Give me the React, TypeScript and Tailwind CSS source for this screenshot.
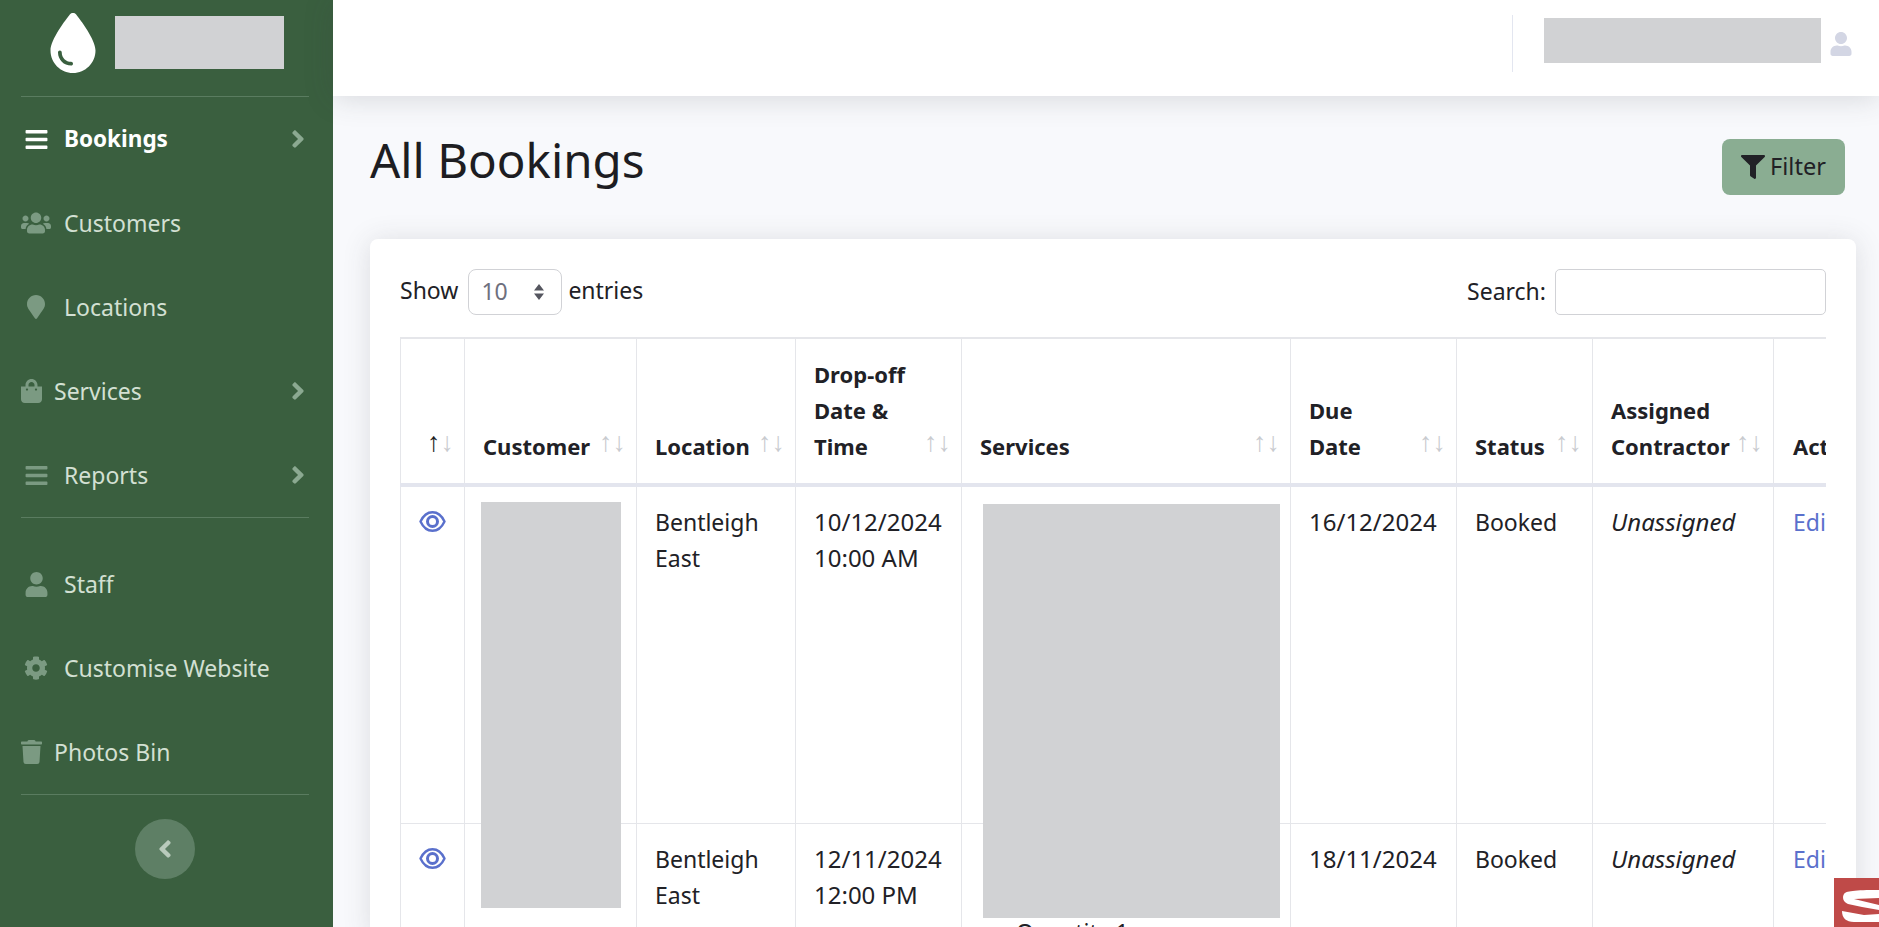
import type { ReactNode } from "react";
import {
  FaAngleLeft,
  FaAngleRight,
  FaBars,
  FaCog,
  FaFilter,
  FaMapMarker,
  FaShoppingBag,
  FaTrash,
  FaUser,
  FaUsers,
} from "react-icons/fa";
import { FaDroplet } from "react-icons/fa6";

const font = { fontFamily: '"Noto Sans", "Lato", sans-serif' };

function NavItem({
  icon,
  label,
  active,
  arrow,
  tight,
}: {
  icon: ReactNode;
  label: string;
  active?: boolean;
  arrow?: boolean;
  tight?: boolean;
}) {
  return (
    <div className="h-[84px] flex items-center pl-[21px] pr-[21px]">
      <span
        className={`flex justify-center shrink-0 ${tight ? "w-[21px] mr-[12px]" : "w-[30px] mr-[13px]"} ${
          active ? "text-white" : "text-[#7b9a82]"
        }`}
      >
        {icon}
      </span>
      <span className={`${active ? "text-[22.5px] font-bold text-white" : "text-[23px] text-[#d3e0d3]"}`}>{label}</span>
      {arrow && <FaAngleRight className="ml-auto text-[#8ba991]" size={28} />}
    </div>
  );
}

function Sidebar() {
  return (
    <aside className="w-[333px] shrink-0 bg-[#3a5f3f] flex flex-col">
      <div className="h-[96px] flex items-center pl-[43px] pb-[10px]">
        <FaDroplet className="text-white" size={60} />
        <div className="ml-[12px] -mt-[1px] w-[169px] h-[53px] bg-[#d1d2d4]" />
      </div>
      <div className="ml-[21px] mr-[24px] border-t border-[#5a7c60]" />
      <NavItem icon={<FaBars size={25} />} label="Bookings" active arrow />
      <NavItem icon={<FaUsers size={30} />} label="Customers" />
      <NavItem icon={<FaMapMarker size={24} />} label="Locations" />
      <NavItem icon={<FaShoppingBag size={24} />} label="Services" arrow tight />
      <NavItem icon={<FaBars size={25} />} label="Reports" arrow />
      <div className="ml-[21px] mr-[24px] border-t border-[#5a7c60] mb-[24px]" />
      <NavItem icon={<FaUser size={25} />} label="Staff" />
      <NavItem icon={<FaCog size={24} />} label="Customise Website" />
      <NavItem icon={<FaTrash size={24} />} label="Photos Bin" tight />
      <div className="ml-[21px] mr-[24px] border-t border-[#5a7c60] mb-[24px]" />
      <div className="self-center w-[60px] h-[60px] -ml-[3px] rounded-full bg-[#5e7f65] flex items-center justify-center">
        <FaAngleLeft className="text-[#b9cabc]" size={28} />
      </div>
    </aside>
  );
}

function EyeIcon() {
  return (
    <svg width="27" height="21" viewBox="0 0 27 21" fill="none" stroke="#5a70cc" strokeWidth="2.4" strokeLinejoin="round">
      <path d="M1.5 10.5 C4.5 4 8.5 1.2 13.5 1.2 C18.5 1.2 22.5 4 25.5 10.5 C22.5 17 18.5 19.8 13.5 19.8 C8.5 19.8 4.5 17 1.5 10.5 Z" />
      <circle cx="13.5" cy="10.5" r="5" strokeWidth="3" />
    </svg>
  );
}

function Sort({ active }: { active?: boolean }) {
  return (
    <span
      className="shrink-0 mb-[8px] text-[27px] leading-[28px] font-normal text-[#c9cbcf]"
      style={{ fontFamily: '"Liberation Sans", sans-serif' }}
    >
      <span className={active ? "text-[#1d1d22]" : ""}>↑</span>↓
    </span>
  );
}

const columns = ["w-[64px]", "w-[172px]", "w-[159px]", "w-[166px]", "w-[329px]", "w-[166px]", "w-[136px]", "w-[181px]", "w-[120px]"];

const headers: ReactNode[] = [
  "",
  "Customer",
  "Location",
  <>Drop-off<br />Date &amp;<br />Time</>,
  "Services",
  <>Due<br />Date</>,
  "Status",
  <>Assigned<br />Contractor</>,
];

function Row({
  drop,
  time,
  due,
  first,
}: {
  drop: string;
  time: string;
  due: string;
  first?: boolean;
}) {
  const cell = "border border-[#e5e6ea] align-top px-[18px] pt-[17px] pb-[19px]";
  return (
    <tr className={first ? "h-[338px]" : "h-[200px]"}>
      <td className={`${cell} text-center !pt-[18px] !px-0`}>
        <span className="inline-flex">
          <EyeIcon />
        </span>
      </td>
      <td className={`${cell} relative`}>
        {first && <div className="absolute z-10 left-[16px] top-[15px] w-[140px] h-[406px] bg-[#d1d2d4]" />}
      </td>
      <td className={cell}>
        Bentleigh
        <br />
        East
      </td>
      <td className={`${cell} text-[24px]`}>
        {drop}
        <br />
        {time}
      </td>
      <td className={`${cell} relative ${first ? "" : "!pt-[90px] !pl-[54px]"}`}>
        {first ? <div className="absolute z-10 left-[21px] top-[17px] w-[297px] h-[414px] bg-[#d1d2d4]" /> : "Quantity 1"}
      </td>
      <td className={`${cell} text-[24px]`}>{due}</td>
      <td className={cell}>Booked</td>
      <td className={`${cell} italic text-[24px]`}>Unassigned</td>
      <td className={`${cell} !pl-[19px] text-[#5a70cc]`}>Edit</td>
    </tr>
  );
}

function BookingsTable() {
  return (
    <div className="w-[1426px] overflow-hidden">
      <table className="w-[1493px] table-fixed border-collapse text-[23px] leading-[36px] text-[#212126]">
        <colgroup>
          {columns.map((c, i) => (
            <col key={i} className={c} />
          ))}
        </colgroup>
        <thead>
          <tr className="border-t-2 border-[#e5e6ea]">
            {headers.map((h, i) => (
              <th key={i} className="border-x border-x-[#e5e6ea] border-b-4 border-b-[#e3e5ee] align-bottom pl-[18px] pr-[10px] pt-[17px] pb-[19px] text-[22px] font-bold text-left">
                <div className={`flex items-end ${i === 0 ? "justify-end" : "justify-between"}`}>
                  <span>{h}</span>
                  <Sort active={i === 0} />
                </div>
              </th>
            ))}
            <th className="border-x border-x-[#e5e6ea] border-b-4 border-b-[#e3e5ee] align-bottom pl-[19px] pr-[18px] pt-[17px] pb-[19px] text-[22px] font-bold text-left">Actions</th>
          </tr>
        </thead>
        <tbody>
          <Row first drop="10/12/2024" time="10:00 AM" due="16/12/2024" />
          <Row drop="12/11/2024" time="12:00 PM" due="18/11/2024" />
        </tbody>
      </table>
    </div>
  );
}

export default function App() {
  return (
    <div className="relative h-screen flex overflow-hidden bg-[#f8f9fc] text-[#212126]" style={font}>
      <Sidebar />
      <main className="flex-1 min-w-0 flex flex-col">
        <header className="relative z-10 h-[96px] shrink-0 bg-white shadow-[0_2px_28px_rgba(58,59,69,0.18)] flex items-center justify-end pr-[26px]">
          <div className="h-[57px] -mt-[9px] border-l border-[#e3e6f0] mr-[31px]" />
          <div className="w-[277px] h-[45px] -mt-[15px] bg-[#d1d2d4]" />
          <FaUser className="ml-[8px] -mt-[8px] text-[#d3d6e4]" size={24} />
        </header>
        <div className="pl-[37px] pr-[23px]">
          <div className="mt-[43px] mb-[44px] flex items-start justify-between pr-[11px]">
            <h1 className="text-[47.5px] leading-[42px] text-[#1d1d22]">All Bookings</h1>
            <button className="h-[56px] w-[123px] rounded-[8px] bg-[#8aad92] flex items-center justify-center gap-[5px] text-[23.5px] text-[#212126]">
              <FaFilter size={24} />
              Filter
            </button>
          </div>
          <section className="rounded-[8px] bg-white shadow-[0_2px_28px_rgba(58,59,69,0.15)] pt-[30px] pl-[30px] pr-[30px] h-[700px]">
            <div className="flex items-center justify-between h-[46px] mb-[22px] text-[23px]">
              <div className="flex items-center">
                <span className="-mt-[4px]">Show</span>
                <div className="ml-[10px] mr-[6px] w-[94px] h-[46px] rounded-[8px] border border-[#d1d2d6] flex items-center justify-between pl-[12px] pr-[16px] text-[#6e707e]">
                  <span className="-mt-[2px]">10</span>
                  <svg width="12" height="18" viewBox="0 0 12 18" fill="#55565f">
                    <path d="M6 1 L11 7.5 H1 Z M6 17 L1 10.5 H11 Z" />
                  </svg>
                </div>
                <span className="-mt-[4px]">entries</span>
              </div>
              <div className="flex items-center gap-[9px]">
                <span className="-mt-[2px]">Search:</span>
                <input className="w-[271px] h-[46px] rounded-[5px] border border-[#d1d2d6] bg-white" />
              </div>
            </div>
            <BookingsTable />
          </section>
        </div>
      </main>
      <div className="absolute right-0 bottom-0 w-[45px] h-[49px] bg-[#bf4a48] overflow-hidden">
        <svg width="45" height="49" viewBox="0 0 45 49" fill="#fff">
          <path d="M10 16 C12 13 20 12 45 12 V20 L20 21 L45 27 V32 L28 29 L14 26 C9 24 8 19 10 16 Z" />
          <path d="M8 33 L30 37 L45 36 V44 L20 44 C12 44 8 40 8 33 Z" />
        </svg>
      </div>
    </div>
  );
}
